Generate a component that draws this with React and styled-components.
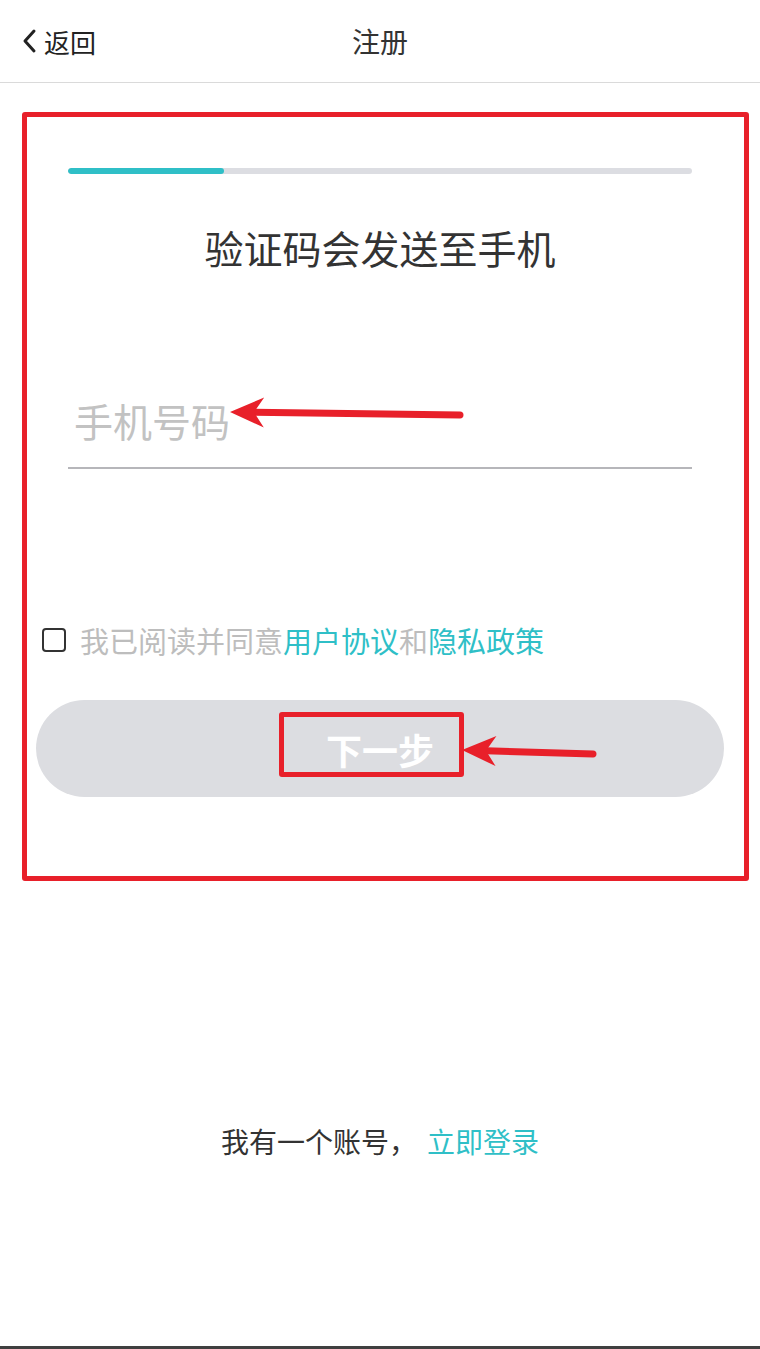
import React from 'react';
import styled, { createGlobalStyle } from 'styled-components';

const TEAL = '#2fbfc7';
const MARK = '#e8202a';

const GlobalStyle = createGlobalStyle`
	html, body {
		margin: 0;
		padding: 0;
		background: #fff;
	}
	body {
		font-family: 'Noto Sans CJK SC', 'Noto Sans', sans-serif;
		color: #333;
	}
`;

const Page = styled.div`
	position: relative;
	width: 760px;
	min-height: 1349px;
	display: flex;
	flex-direction: column;
	box-sizing: border-box;
	border-bottom: 3px solid #3f3f3f;
	overflow: hidden;
`;

const TopBar = styled.header`
	position: relative;
	height: 82px;
	border-bottom: 1px solid #dadada;
	display: flex;
	align-items: center;
	justify-content: center;
`;

const BackButton = styled.button`
	position: absolute;
	left: 22px;
	top: 0;
	bottom: 0;
	display: flex;
	align-items: center;
	gap: 6px;
	padding: 0;
	border: none;
	background: none;
	font-family: inherit;
	font-size: 26px;
	color: #222;
`;

const Title = styled.h1`
	margin: 0;
	font-size: 28px;
	font-weight: 400;
	color: #333;
`;

const Form = styled.main`
	display: flex;
	flex-direction: column;
	padding: 85px 68px 0;
`;

const Progress = styled.div`
	height: 6px;
	border-radius: 3px;
	background: #dcdde2;
	overflow: hidden;
`;

const ProgressFill = styled.div`
	height: 100%;
	border-radius: 3px;
	background: ${TEAL};
`;

const Heading = styled.h2`
	margin: 47px 0 0;
	font-size: 39px;
	line-height: 52px;
	font-weight: 400;
	text-align: center;
	color: #333;
`;

const PhoneInput = styled.input`
	margin-top: 100px;
	height: 94px;
	padding: 0 6px;
	border: none;
	border-bottom: 2px solid #b6b6ba;
	outline: none;
	font-family: inherit;
	font-size: 39px;
	color: #333;
	background: transparent;

	&::placeholder {
		color: #c2c2c2;
	}
`;

const Agreement = styled.label`
	margin: 151px -26px 0;
	display: flex;
	align-items: center;
	gap: 14px;
	height: 40px;
	font-size: 29px;
	color: #bdbdbd;
	white-space: nowrap;
`;

const Checkbox = styled.span`
	width: 20px;
	height: 20px;
	border: 2px solid #333;
	border-radius: 4px;
	flex-shrink: 0;
`;

const Link = styled.a`
	color: ${TEAL};
	text-decoration: none;
`;

const NextButton = styled.button`
	margin: 40px -32px 0;
	height: 97px;
	border: none;
	border-radius: 49px;
	background: #dcdde1;
	color: #fff;
	font-family: inherit;
	font-size: 36px;
	font-weight: 700;
`;

const Footer = styled.p`
	margin: 324px 0 0;
	line-height: 40px;
	font-size: 28px;
	text-align: center;
	color: #333;
`;

const LoginLink = styled.a`
	margin-left: 10px;
	color: ${TEAL};
	text-decoration: none;
`;

const MarkBox = styled.div`
	position: absolute;
	box-sizing: border-box;
	border: 5px solid ${MARK};
	border-radius: 3px;
	pointer-events: none;
`;

const Overlay = styled.svg`
	position: absolute;
	left: 0;
	top: 0;
	pointer-events: none;
`;

const Arrow = ({ x1, y1, x2, y2 }) => {
	// tip at (x2, y2), tail at (x1, y1)
	const dx = x1 - x2;
	const dy = y1 - y2;
	const len = Math.hypot(dx, dy);
	const ux = dx / len;
	const uy = dy / len;
	const headLen = 34;
	const back = 24;
	const half = 15;
	const bx = x2 + ux * headLen;
	const by = y2 + uy * headLen;
	const nx = x2 + ux * back;
	const ny = y2 + uy * back;
	const p1 = `${bx - uy * half},${by + ux * half}`;
	const p2 = `${bx + uy * half},${by - ux * half}`;
	return (
		<g>
			<line x1={x1} y1={y1} x2={nx} y2={ny} stroke={MARK} strokeWidth='7' strokeLinecap='round' />
			<polygon points={`${x2},${y2} ${p1} ${nx},${ny} ${p2}`} fill={MARK} />
		</g>
	);
};

const App = () => {
	const step = 0.25;

	return (
		<Page>
			<GlobalStyle />
			<TopBar>
				<BackButton>
					<svg width='16' height='26' viewBox='0 0 16 26'>
						<polyline points='12,3 3,13 12,23' fill='none' stroke='#222' strokeWidth='3' strokeLinecap='round' strokeLinejoin='round' />
					</svg>
					返回
				</BackButton>
				<Title>注册</Title>
			</TopBar>

			<Form>
				<Progress>
					<ProgressFill style={{ width: `${step * 100}%` }} />
				</Progress>
				<Heading>验证码会发送至手机</Heading>
				<PhoneInput placeholder='手机号码' />
				<Agreement>
					<Checkbox />
					<span>
						我已阅读并同意<Link href='#'>用户协议</Link>和<Link href='#'>隐私政策</Link>
					</span>
				</Agreement>
				<NextButton>下一步</NextButton>
			</Form>

			<Footer>
				我有一个账号，<LoginLink href='#'>立即登录</LoginLink>
			</Footer>

			<MarkBox style={{ left: 22, top: 112, width: 727, height: 769 }} />
			<MarkBox style={{ left: 279, top: 712, width: 185, height: 65 }} />
			<Overlay width='760' height='1349'>
				<Arrow x1={460} y1={415} x2={230} y2={412} />
				<Arrow x1={593} y1={754} x2={462} y2={750} />
			</Overlay>
		</Page>
	);
};

export default App;
